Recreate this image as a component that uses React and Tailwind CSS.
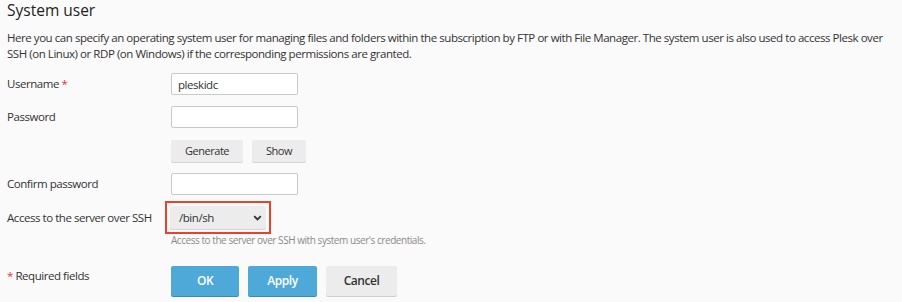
import React from 'react';

const FONT = { fontFamily: '"Open Sans", "Noto Sans", sans-serif' };

const Label = ({ children, required }) => (
  <div className="w-[164px] shrink-0 text-[11.5px] text-[#333]">
    {children}
    {required && <span className="text-[#d9363e]"> *</span>}
  </div>
);

const TextInput = ({ value = '' }) => (
  <input
    readOnly
    value={value}
    className="w-[127px] h-[22px] bg-white border border-[#c9c9c9] rounded-[2px] px-[6px] text-[11.5px] tracking-[-0.45px] text-[#333] outline-none"
  />
);

const GrayButton = ({ children, className = '' }) => (
  <button
    className={`h-[22px] bg-[#ececec] rounded-[2px] shadow-[0_1px_0_#d4d4d4] text-[11px] tracking-[-0.45px] text-[#333] ${className}`}
  >
    {children}
  </button>
);

export default function App() {
  return (
    <div className="w-[902px] h-[302px] bg-[#fafafa] overflow-hidden px-[7px] tracking-[-0.45px]" style={FONT}>
      <h2 className="text-[15.5px] leading-[20px] tracking-normal text-[#222]">System user</h2>

      <p className="mt-[10px] text-[11.5px] leading-[16px] text-[#333] w-[890px]">
        Here you can specify an operating system user for managing files and folders within the subscription by FTP or with File Manager. The system user is also used to access Plesk over SSH (on Linux) or RDP (on Windows) if the corresponding permissions are granted.
      </p>

      <div className="flex items-center mt-[11px]">
        <Label required>Username</Label>
        <TextInput value="pleskidc" />
      </div>

      <div className="flex items-center mt-[11px]">
        <Label>Password</Label>
        <TextInput />
      </div>

      <div className="flex items-center mt-[12px] pl-[164px] gap-[9px]">
        <GrayButton className="w-[72px]">Generate</GrayButton>
        <GrayButton className="w-[54px]">Show</GrayButton>
      </div>

      <div className="flex items-center mt-[11px]">
        <Label>Confirm password</Label>
        <TextInput />
      </div>

      <div className="flex items-center mt-[6px]">
        <Label>Access to the server over SSH</Label>
        <div className="-ml-[6px] border-2 border-[#e8412c] px-[3px] py-[3px]">
          <div className="w-[96px] h-[23px] bg-[#ececec] rounded-[2px] shadow-[0_1px_0_#d4d4d4] flex items-center justify-between pl-[9px] pr-[4px] text-[11.5px] text-[#333]">
            <span>/bin/sh</span>
            <svg width="9" height="6" viewBox="0 0 9 6">
              <path d="M1.2 1.2 L4.5 4.5 L7.8 1.2" fill="none" stroke="#333" strokeWidth="1.8" />
            </svg>
          </div>
        </div>
      </div>
      <div className="pl-[164px] text-[10px] leading-[13px] text-[#8a8a8a]">
        Access to the server over SSH with system user's credentials.
      </div>

      <div className="flex items-start mt-[19px]">
        <div className="w-[164px] shrink-0 pt-[2px] text-[11.5px] leading-[16px] text-[#333]">
          <span className="text-[#d9363e]">*</span> Required fields
        </div>
        <div className="flex gap-[9px]">
          <button className="w-[68px] h-[30px] bg-[#4ea9d9] rounded-[2px] shadow-[0_1px_0_#3a8bb8] text-[12px] tracking-[-0.45px] font-semibold text-white">OK</button>
          <button className="w-[69px] h-[30px] bg-[#4ea9d9] rounded-[2px] shadow-[0_1px_0_#3a8bb8] text-[12px] tracking-[-0.45px] font-semibold text-white">Apply</button>
          <button className="w-[71px] h-[30px] bg-[#ececec] rounded-[2px] shadow-[0_1px_0_#cfcfcf] text-[12px] tracking-[-0.45px] font-semibold text-[#333]">Cancel</button>
        </div>
      </div>
    </div>
  );
}
